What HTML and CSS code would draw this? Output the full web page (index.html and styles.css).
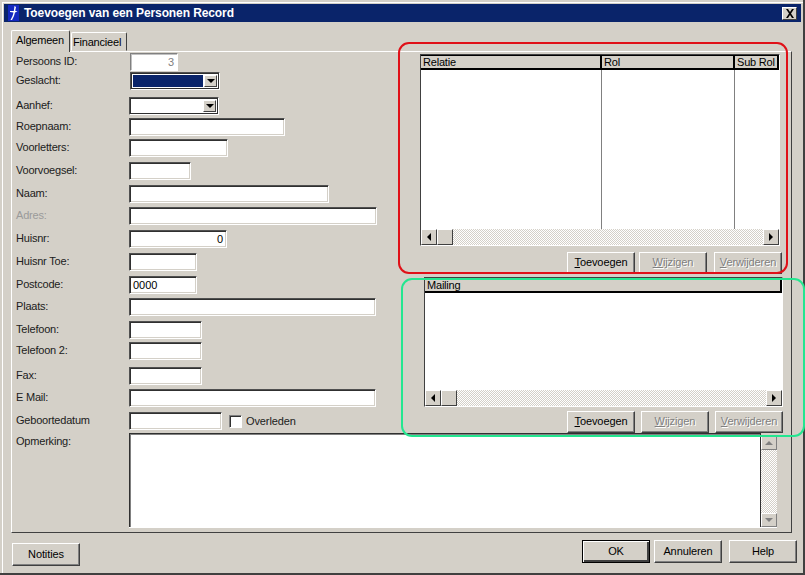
FILE: index.html
```html
<!DOCTYPE html>
<html lang="nl">
<head>
<meta charset="utf-8">
<title>Toevoegen van een Personen Record</title>
<link rel="stylesheet" href="styles.css">
</head>
<body>
<div class="window">
  <div class="titlebar">
    <svg class="app-icon" width="16" height="16" viewBox="0 0 16 16"><rect x="2" y="0" width="11" height="16" fill="#1428c0"/><path d="M8.5 1 L7.8 6 L4 6 L4 7 L7.5 7.5 L6.5 11 L4.5 15 L6 15 L8 11 L9 7.5 L11.5 6.5 L9.2 5.8 L10 2 Z" fill="#fff"/></svg>
    <span class="title-text">Toevoegen van een Personen Record</span>
    <span class="close-btn"><svg width="10" height="9" viewBox="0 0 10 9"><path d="M1 0 L3 0 L5 3 L7 0 L9 0 L6 4.5 L9 9 L7 9 L5 6 L3 9 L1 9 L4 4.5 Z" fill="#000"/></svg></span>
  </div>

  <div class="tabs">
    <div class="tab tab-active">Algemeen</div>
    <div class="tab tab-inactive">Financieel</div>
  </div>

  <div class="panel">
    <div class="upper">
      <div class="form">
        <label class="lbl">Persoons ID:</label><div class="field disabled w-id">3</div>
        <label class="lbl">Geslacht:</label><div class="combo w-gesl"><span class="combo-value selected"></span><span class="combo-btn"><i class="tri tri-down"></i></span></div>
        <label class="lbl">Aanhef:</label><div class="combo w-aanhef"><span class="combo-value"></span><span class="combo-btn"><i class="tri tri-down"></i></span></div>
        <label class="lbl">Roepnaam:</label><div class="field w-roep"></div>
        <label class="lbl">Voorletters:</label><div class="field w-vl"></div>
        <label class="lbl">Voorvoegsel:</label><div class="field w-vv"></div>
        <label class="lbl">Naam:</label><div class="field w-naam"></div>
        <label class="lbl lbl-gray">Adres:</label><div class="field w-long1"></div>
        <label class="lbl">Huisnr:</label><div class="field w-huis num">0</div>
        <label class="lbl">Huisnr Toe:</label><div class="field w-toe"></div>
        <label class="lbl">Postcode:</label><div class="field w-toe">0000</div>
        <label class="lbl">Plaats:</label><div class="field w-long"></div>
        <label class="lbl">Telefoon:</label><div class="field w-tel"></div>
        <label class="lbl">Telefoon 2:</label><div class="field w-tel"></div>
        <label class="lbl">Fax:</label><div class="field w-tel"></div>
        <label class="lbl">E Mail:</label><div class="field w-long"></div>
        <label class="lbl">Geboortedatum</label>
        <div class="birth"><div class="field w-geb"></div><span class="check"></span><span class="check-label">Overleden</span></div>
      </div>

      <div class="lists">
        <div class="section section-rel">
          <div class="list list-rel">
            <div class="list-head cols-rel"><span class="th">Relatie</span><span class="th">Rol</span><span class="th">Sub Rol</span></div>
            <div class="list-body cols-rel"><span class="td"></span><span class="td"></span><span class="td"></span></div>
            <div class="hscroll">
              <span class="sb-btn"><i class="tri tri-left"></i></span><span class="sb-thumb"></span><span class="sb-track"></span><span class="sb-btn"><i class="tri tri-right"></i></span>
            </div>
          </div>
          <div class="btn-row">
            <div class="btn"><u>T</u>oevoegen</div>
            <div class="btn off"><u>W</u>ijzigen</div>
            <div class="btn off btn-last"><u>V</u>erwijderen</div>
          </div>
        </div>
        <div class="section section-mail">
          <div class="list list-mail">
            <div class="list-head"><span class="th th-full">Mailing</span></div>
            <div class="list-body"></div>
            <div class="hscroll">
              <span class="sb-btn"><i class="tri tri-left"></i></span><span class="sb-thumb"></span><span class="sb-track"></span><span class="sb-btn"><i class="tri tri-right"></i></span>
            </div>
          </div>
          <div class="btn-row btn-row-mail">
            <div class="btn"><u>T</u>oevoegen</div>
            <div class="btn off"><u>W</u>ijzigen</div>
            <div class="btn off"><u>V</u>erwijderen</div>
          </div>
        </div>
      </div>
    </div>

    <div class="memo-row">
      <label class="lbl memo-lbl">Opmerking:</label>
      <div class="memo">
        <div class="memo-text"></div>
        <div class="vscroll">
          <span class="sb-btn"><i class="tri tri-up"></i></span><span class="sb-track"></span><span class="sb-btn"><i class="tri tri-downgray"></i></span>
        </div>
      </div>
    </div>
  </div>

  <div class="footer">
    <div class="btn btn-foot btn-notes">Notities</div>
    <div class="foot-right">
      <div class="btn btn-foot btn-default">OK</div>
      <div class="btn btn-foot btn-cancel">Annuleren</div>
      <div class="btn btn-foot">Help</div>
    </div>
  </div>

  <div class="mark mark-red"></div>
  <div class="mark mark-green"></div>
</div>
</body>
</html>
```
FILE: styles.css
```css
* { box-sizing: border-box; }
html, body { margin: 0; padding: 0; }
body {
  width: 805px; height: 575px; overflow: hidden;
  background: #d4d0c8;
  font: 11px/18px "Liberation Sans", Arial, sans-serif;
  color: #000;
}
.window {
  position: relative;
  width: 805px; height: 575px;
  padding: 4px 4px 0;
  background: #d4d0c8;
  border-right: 2px solid #404040;
  border-bottom: 2px solid #404040;
  box-shadow: inset 2px 2px 0 #d4d0c8, inset 3px 3px 0 #fff;
  display: flex; flex-direction: column;
}
.titlebar {
  height: 18px; flex: none;
  background: #0a246a;
  display: flex; align-items: center;
  padding: 0 4px 0 2px;
  margin-right: -2px;
  color: #fff;
}
.app-icon { flex: none; margin-right: 2px; }
.title-text { font-weight: bold; font-size: 12px; letter-spacing: -0.1px; flex: 1; }
.close-btn {
  width: 15px; height: 13px;
  background: #d4d0c8;
  border: 1px solid; border-color: #fff #404040 #404040 #fff;
  display: flex; align-items: center; justify-content: center;
}

.tabs { display: flex; align-items: flex-end; height: 30px; padding-left: 7px; flex: none; position: relative; z-index: 1; margin-bottom: -1px; letter-spacing: -0.2px; }
.tab {
  border: 1px solid; border-color: #fff #404040 transparent #fff;
  border-radius: 2px 2px 0 0;
}
.tab-active { width: 59px; height: 22px; padding: 0 0 0 4px; line-height: 18px; background: #d4d0c8; border-bottom: 0; }
.tab-inactive { width: 56px; height: 19px; margin-left: 1px; padding: 1px 0 0 1px; line-height: 17px; margin-bottom: 1px; white-space: nowrap; }

.panel {
  flex: none;
  height: 482px;
  width: 781px;
  margin-left: 7px;
  padding: 1px 0 0 1px;
  border: 1px solid; border-color: #fff #404040 #404040 #fff;
  display: flex; flex-direction: column;
}
.upper { display: flex; height: 376px; flex: none; }

.form {
  display: grid;
  width: 404px;
  flex: none;
  padding: 0 0 0 3px;
  grid-template-columns: 113px 1fr;
  grid-template-rows: 19px 25px 21px 21px 23px 23px 22px 23px 23px 23px 22px 23px 21px 25px 22px 23px 17px;
  align-items: start;
}
.lbl { color: #202020; display: block; height: 18px; line-height: 16px; font-size: 11px; letter-spacing: -0.2px; white-space: nowrap; }
.lbl-gray { color: #9a9a9a; }

.field {
  height: 18px;
  background: #fff;
  border: 1px solid; border-color: #505050 #fff #fff #505050;
  box-shadow: inset 1px 1px 0 #303030, inset -1px -1px 0 #d4d0c8;
  padding: 0 3px;
  line-height: 16px;
  overflow: hidden;
}
.disabled { color: #808080; text-align: right; margin-left: 1px; border-color: #808080 #fff #fff #808080; box-shadow: inset 1px 1px 0 #c0c0c0; }
.num { text-align: right; }
.w-id { width: 48px; }
.w-roep { width: 156px; }
.w-vl { width: 99px; }
.w-vv { width: 62px; }
.w-naam { width: 200px; }
.w-long1 { width: 248px; }
.w-long { width: 247px; }
.w-huis { width: 98px; }
.w-toe { width: 68px; }
.w-tel { width: 73px; }
.w-geb { width: 93px; flex: none; }

.combo {
  height: 18px;
  background: #fff;
  border: 1px solid; border-color: #505050 #fff #fff #505050;
  box-shadow: inset 1px 1px 0 #303030, inset -1px -1px 0 #303030;
  display: flex;
  padding: 2px;
}
.w-gesl { width: 90px; margin-left: 1px; }
.w-aanhef { width: 90px; }
.combo-value { flex: 1; margin-right: 1px; }
.selected { background: #0a246a; }
.combo-btn {
  width: 13px; flex: none;
  background: #d4d0c8;
  border: 1px solid; border-color: #fff #404040 #404040 #fff;
  display: flex; align-items: center; justify-content: center;
}
.tri { display: block; width: 0; height: 0; border-style: solid; border-color: transparent; }
.tri-down { border-width: 4px 4px 0; border-top-color: #000; }
.tri-downgray { border-width: 4px 4px 0; border-top-color: #808080; }
.tri-up { border-width: 0 4px 4px; border-bottom-color: #808080; }
.tri-left { border-width: 4px 4px 4px 0; border-right-color: #000; }
.tri-right { border-width: 4px 0 4px 4px; border-left-color: #000; }

.birth { display: flex; align-items: center; height: 18px; }
.check {
  width: 13px; height: 13px; margin-left: 7px; flex: none;
  background: #fff;
  border: 1px solid; border-color: #808080 #fff #fff #808080;
  box-shadow: inset 1px 1px 0 #303030;
}
.check-label { margin-left: 4px; color: #202020; letter-spacing: -0.1px; }

.lists { flex: none; width: 364px; margin-left: 3px; display: flex; flex-direction: column; }
.section { display: flex; flex-direction: column; }
.section-rel { width: 362px; }
.section-mail { margin-left: 4px; margin-top: 3px; width: 359px; }

.list { display: flex; flex-direction: column; background: #fff; border: 1px solid; border-color: #404040 #fff #fff #404040; }
.list-rel { height: 192px; width: 360px; margin-top: 1px; }
.list-mail { height: 130px; }
.list-head { height: 15px; flex: none; display: flex; }
.cols-rel { display: grid; grid-template-columns: 181px 133px 44px; }
.th {
  background: #d4d0c8;
  border: 1px solid; border-color: #000 #000 #000 transparent;
  border-width: 1px 2px 2px 0;
  padding-left: 2px;
  line-height: 12px;
  letter-spacing: -0.2px;
  overflow: hidden; white-space: nowrap;
}
.th-full { flex: 1; }
.list-body { flex: 1; }
.td { border-right: 1px solid #808080; }
.td:last-child { border-right: 0; }

.hscroll { height: 16px; flex: none; display: flex; }
.sb-btn {
  width: 16px; height: 16px; flex: none;
  background: #d4d0c8;
  border: 1px solid; border-color: #fff #404040 #404040 #fff;
  display: flex; align-items: center; justify-content: center;
}
.sb-thumb { width: 16px; flex: none; background: #d4d0c8; border: 1px solid; border-color: #fff #404040 #404040 #fff; }
.sb-track { flex: 1; background: repeating-conic-gradient(#fff 0 25%, #d4d0c8 0 50%) 0 0 / 2px 2px; }

.btn-row { display: flex; justify-content: flex-end; gap: 4px; margin-top: 6px; }
.btn-row-mail { gap: 6px; margin-top: 4px; }
.btn-last { margin-left: 3px; }
.btn {
  width: 68px; height: 22px;
  background: #d4d0c8;
  border: 1px solid; border-color: #fff #404040 #404040 #fff;
  box-shadow: inset -1px -1px 0 #808080;
  text-align: center;
  line-height: 19px;
  letter-spacing: -0.1px;
  white-space: nowrap;
}
.off { color: #808080; text-shadow: 1px 1px 0 #fff; }

.memo-row { display: flex; margin-top: 4px; padding-left: 3px; flex: none; }
.memo-lbl { width: 113px; flex: none; }
.memo {
  width: 648px; height: 95px;
  display: flex;
  border-bottom: 1px solid #fff;
}
.memo-text {
  flex: 1;
  background: #fff;
  border: 1px solid #303030;
  border-bottom: 0;
  box-shadow: inset 1px 1px 0 #808080;
}
.vscroll { width: 16px; flex: none; margin-top: 3px; display: flex; flex-direction: column; }
.vscroll .sb-btn { height: 14px; border-color: #fff #808080 #808080 #fff; }

.footer { flex: 1; display: flex; justify-content: space-between; padding: 7px 4px 0 1px; margin-left: 7px; }
.btn-foot { width: 68px; height: 23px; line-height: 20px; }
.btn-notes { margin-top: 3px; }
.foot-right { display: flex; margin-right: -2px; }
.btn-default { border: 1px solid #000; box-shadow: inset 1px 1px 0 #fff, inset -2px -2px 0 #404040; margin-right: 4px; }
.btn-cancel { margin-right: 7px; }

.mark { position: absolute; border-radius: 11px; border: 2px solid; pointer-events: none; }
.mark-red { left: 398px; top: 42px; width: 390px; height: 232px; border-color: #e01018; }
.mark-green { left: 401px; top: 278px; width: 404px; height: 159px; border-color: #24e690; }
```
